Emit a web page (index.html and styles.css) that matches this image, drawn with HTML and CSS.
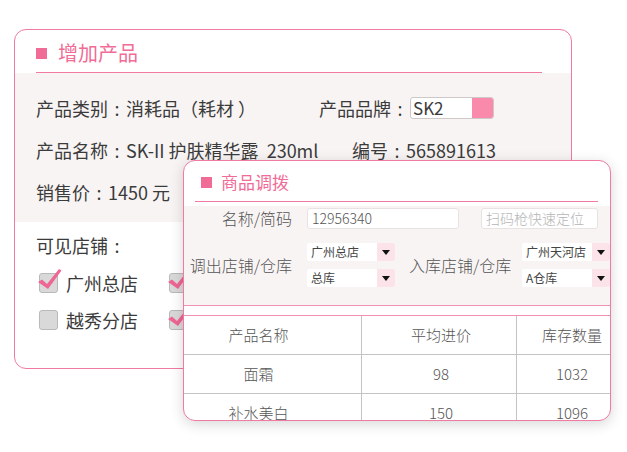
FILE: index.html
```html
<!DOCTYPE html>
<html lang="zh-CN">
<head>
<meta charset="utf-8">
<link rel="stylesheet" href="styles.css">
</head>
<body>
<div class="stage">
  <section class="card card-product">
    <header class="head">
      <span class="sq"></span><h2 class="title">增加产品</h2>
    </header>
    <div class="prod-body">
      <div class="row"><span class="lead lead-1">产品类别<span class="colon">:</span>消耗品（耗材 ）</span><span>产品品牌<span class="colon">:</span></span><span class="brand"><span class="brand-val">SK2</span><span class="brand-btn"></span></span></div>
      <div class="row"><span class="lead lead-2">产品名称<span class="colon">:</span>SK-II 护肤精华露  230ml</span><span>编号<span class="colon">:</span>565891613</span></div>
      <div class="row">销售价<span class="colon">:</span>1450 元</div>
    </div>
    <div class="shops">
      <div class="shops-title">可见店铺<span class="colon">:</span></div>
      <div class="shop-grid">
        <div class="chk on"><span class="box"><svg class="tick" viewBox="0 0 26 24" width="26" height="24"><path d="M1 14 L5 11.5 L10 16 L22 1 L24.5 2.5 L11 21 Z"/></svg></span><span>广州总店</span></div>
        <div class="chk on"><span class="box"><svg class="tick" viewBox="0 0 26 24" width="26" height="24"><path d="M1 14 L5 11.5 L10 16 L22 1 L24.5 2.5 L11 21 Z"/></svg></span><span>天河分店</span></div>
        <div class="chk"><span class="box"></span><span>越秀分店</span></div>
        <div class="chk on"><span class="box"><svg class="tick" viewBox="0 0 26 24" width="26" height="24"><path d="M1 14 L5 11.5 L10 16 L22 1 L24.5 2.5 L11 21 Z"/></svg></span><span>海珠分店</span></div>
      </div>
    </div>
  </section>

  <section class="card card-transfer">
    <header class="head">
      <span class="sq"></span><h2 class="title">商品调拨</h2>
    </header>
    <div class="form">
      <div class="frow frow-1">
        <span class="flabel">名称/简码</span>
        <span class="inp inp-code">12956340</span>
        <span class="inp inp-scan">扫码枪快速定位</span>
      </div>
      <div class="frow frow-2">
        <span class="flabel">调出店铺/仓库</span>
        <div class="sel-stack">
          <div class="sel"><span class="sel-txt">广州总店</span><span class="sel-arr"></span></div>
          <div class="sel"><span class="sel-txt">总库</span><span class="sel-arr"></span></div>
        </div>
        <span class="flabel flabel-2">入库店铺/仓库</span>
        <div class="sel-stack">
          <div class="sel"><span class="sel-txt">广州天河店</span><span class="sel-arr"></span></div>
          <div class="sel"><span class="sel-txt">A仓库</span><span class="sel-arr"></span></div>
        </div>
      </div>
    </div>
    <div class="tbl">
      <div class="cell c1 th">产品名称</div><div class="cell c2 th">平均进价</div><div class="cell c3 th">库存数量</div>
      <div class="cell c1">面霜</div><div class="cell c2">98</div><div class="cell c3">1032</div>
      <div class="cell c1">补水美白</div><div class="cell c2">150</div><div class="cell c3">1096</div>
    </div>
  </section>
</div>
</body>
</html>
```

FILE: styles.css
```css
* { box-sizing: border-box; margin: 0; padding: 0; }
html, body { width: 627px; height: 452px; overflow: hidden; background: #fff; }
body { font-family: "Noto Sans CJK SC", "Noto Sans", sans-serif; color: #3b3b3b; }

.stage { position: relative; width: 627px; height: 452px; padding: 29px 0 0 14px; }

.card { border: 1px solid #f07aa2; border-radius: 12px; background: #fff; overflow: hidden; }

.head { display: flex; align-items: center; border-bottom: 1px solid #f07aa2; }
.sq { width: 11px; height: 11px; background: #f06c97; flex: none; }
.title { font-weight: normal; color: #f06c97; }

.colon { display: inline-block; width: 18px; text-align: center; }

/* card 1 */
.card-product { width: 558px; height: 340px; }
.card-product .head { margin: 0 29px 0 21px; padding: 9px 0 5px; }
.card-product .title { font-size: 20px; line-height: 28px; margin-left: 11px; }

.prod-body { background: #f8f4f4; padding: 14px 0 9px 21px; font-size: 18px; }
.row { height: 42px; display: flex; align-items: center; white-space: pre; line-height: 24px; }
.lead-1 { width: 283px; }
.lead-2 { width: 316px; }
.brand { display: flex; width: 84px; height: 22px; border: 1px solid #cfc8c8; border-radius: 3px; background: #fff; overflow: hidden; margin-left: 1px; }
.brand-val { flex: 1; font-size: 17px; line-height: 20px; padding-left: 2px; }
.brand-btn { width: 21px; background: #f98aab; }

.shops { padding: 11px 0 0 21px; }
.shops-title { font-size: 18px; line-height: 24px; }
.shop-grid { display: grid; grid-template-columns: 130px 130px; row-gap: 17px; margin-top: 16px; padding-left: 3px; }
.chk { display: flex; align-items: center; height: 20px; font-size: 18px; line-height: 24px; }
.box { position: relative; width: 19px; height: 20px; background: #d9d9d9; border: 1px solid #b9b9b9; border-radius: 3px; margin-right: 8px; flex: none; }
.tick { position: absolute; left: -3px; top: -6px; overflow: visible; }
.tick path { fill: #ef6594; }

/* card 2 */
.card-transfer { position: absolute; left: 183px; top: 160px; width: 428px; height: 261px; box-shadow: 0 3px 14px rgba(0, 0, 0, 0.16); color: #555; }
.card-transfer .head { margin: 0 12px 4px 11px; padding: 9px 0 7px 6px; }
.card-transfer .title { font-size: 17px; line-height: 24px; margin-left: 9px; }

.form { background: #f9f4f4; border-bottom: 1px solid #f290b2; padding: 1px 0 18px; margin-bottom: 9px; }
.frow { display: flex; align-items: center; white-space: nowrap; }
.flabel { width: 108px; text-align: right; font-size: 16px; line-height: 22px; flex: none; font-weight: 300; }
.inp { height: 21px; background: #fff; border: 1px solid #e9e2e2; border-radius: 3px; font-size: 14px; line-height: 19px; padding-left: 4px; flex: none; font-weight: 300; }
.inp-code { width: 152px; margin-left: 15px; color: #555; }
.inp-scan { width: 117px; margin-left: 22px; color: #b5b5b5; }
.frow-2 { margin-top: 14px; }
.sel-stack { display: flex; flex-direction: column; gap: 8px; margin-left: 15px; flex: none; }
.frow-2 .sel-stack:last-child { margin-left: 11px; }
.flabel-2 { width: 102px; margin-left: 14px; }
.sel { display: flex; width: 88px; height: 18px; background: #fff; border-radius: 2px; overflow: hidden; }
.sel-txt { flex: 1; font-size: 12px; line-height: 18px; padding-left: 4px; color: #444; }
.sel-arr { position: relative; width: 18px; background: #fce3e9; }
.sel-arr::after { content: ""; position: absolute; left: 5px; top: 7px; border-left: 4px solid transparent; border-right: 4px solid transparent; border-top: 5px solid #111; }

.tbl { display: grid; grid-template-columns: 178px 155px 112px; border-top: 1px solid #f290b2; font-size: 15px; color: #555; font-weight: 300; }
.cell { height: 39px; display: flex; align-items: center; justify-content: center; border-bottom: 1px solid #c4c4c4; border-right: 1px solid #c4c4c4; line-height: 20px; }
.cell.c1 { padding-right: 28px; }
.cell.c2 { padding-left: 4px; }
.cell.c3 { border-right: none; padding-right: 2px; }
```
